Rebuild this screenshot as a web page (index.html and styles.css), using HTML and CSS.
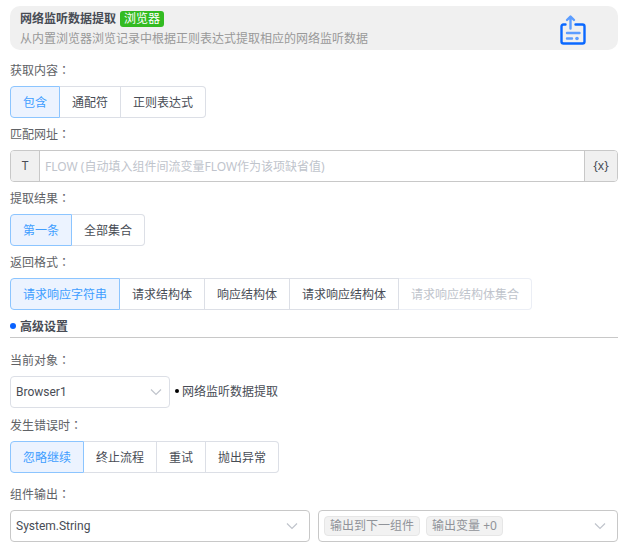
FILE: index.html
```html
<!DOCTYPE html>
<html lang="zh-CN">
<head>
    <meta charset="UTF-8">
    <meta name="viewport" content="width=device-width, initial-scale=1.0">
    <title>网络监听数据提取</title>
    <link rel="stylesheet" href="styles.css">
</head>
<body>
    <header class="header">
        <div class="header-text">
            <h1>网络监听数据提取 <span class="badge">浏览器</span></h1>
            <p>从内置浏览器浏览记录中根据正则表达式提取相应的网络监听数据</p>
        </div>
        <svg class="header-icon" viewBox="0 0 28 32" fill="none" stroke-width="2.4" stroke-linecap="round" stroke-linejoin="round" aria-hidden="true">
            <path stroke="#0a68ff" d="M6.5 10.5H4.5Q2.5 10.5 2.5 12.5V27.5Q2.5 29.5 4.5 29.5H23.5Q25.5 29.5 25.5 27.5V12.5Q25.5 10.5 23.5 10.5H16.5"/>
            <path stroke="#5c9dff" d="M11.5 14.5V3M8 6L11.5 2.5L15 6M8 19H20.5M8 24.5H13"/>
            <circle cx="18" cy="24.5" r="1.8" fill="#5c9dff" />
        </svg>
    </header>

    <form>
        <div class="field">
            <div class="field-label" id="content-label">获取内容<span class="colon" lang="zh-TW">：</span></div>
            <div class="radio-group" role="radiogroup" aria-labelledby="content-label">
                <label><input type="radio" name="content" checked><span>包含</span></label>
                <label><input type="radio" name="content"><span>通配符</span></label>
                <label><input type="radio" name="content"><span>正则表达式</span></label>
            </div>
        </div>

        <div class="field">
            <label class="field-label" for="url">匹配网址<span class="colon" lang="zh-TW">：</span></label>
            <div class="input-group">
                <button type="button" class="addon">T</button>
                <input type="text" id="url" placeholder="FLOW (自动填入组件间流变量FLOW作为该项缺省值)">
                <button type="button" class="addon">{x}</button>
            </div>
        </div>

        <div class="field">
            <div class="field-label" id="result-label">提取结果<span class="colon" lang="zh-TW">：</span></div>
            <div class="radio-group" role="radiogroup" aria-labelledby="result-label">
                <label><input type="radio" name="result" checked><span>第一条</span></label>
                <label><input type="radio" name="result"><span>全部集合</span></label>
            </div>
        </div>

        <div class="field">
            <div class="field-label" id="format-label">返回格式<span class="colon" lang="zh-TW">：</span></div>
            <div class="radio-group" role="radiogroup" aria-labelledby="format-label">
                <label><input type="radio" name="format" checked><span>请求响应字符串</span></label>
                <label><input type="radio" name="format"><span>请求结构体</span></label>
                <label><input type="radio" name="format"><span>响应结构体</span></label>
                <label><input type="radio" name="format"><span>请求响应结构体</span></label>
                <label><input type="radio" name="format" disabled><span>请求响应结构体集合</span></label>
            </div>
        </div>

        <h2 class="section-title">高级设置</h2>

        <div class="field">
            <label class="field-label" for="target">当前对象<span class="colon" lang="zh-TW">：</span></label>
            <div class="target-row">
                <div class="select-box light">
                    <select id="target">
                        <option>Browser1</option>
                    </select>
                    <svg class="arrow" viewBox="0 0 12 8" aria-hidden="true"><path d="M1 1.5L6 6.5L11 1.5"/></svg>
                </div>
                <span class="target-name">网络监听数据提取</span>
            </div>
        </div>

        <div class="field">
            <div class="field-label" id="error-label">发生错误时<span class="colon" lang="zh-TW">：</span></div>
            <div class="radio-group" role="radiogroup" aria-labelledby="error-label">
                <label><input type="radio" name="error" checked><span>忽略继续</span></label>
                <label><input type="radio" name="error"><span>终止流程</span></label>
                <label><input type="radio" name="error"><span>重试</span></label>
                <label><input type="radio" name="error"><span>抛出异常</span></label>
            </div>
        </div>

        <div class="field">
            <label class="field-label" for="output">组件输出<span class="colon" lang="zh-TW">：</span></label>
            <div class="output-row">
                <div class="select-box">
                    <select id="output">
                        <option>System.String</option>
                    </select>
                    <svg class="arrow" viewBox="0 0 12 8" aria-hidden="true"><path d="M1 1.5L6 6.5L11 1.5"/></svg>
                </div>
                <div class="select-box">
                    <button type="button" class="tag-select" aria-haspopup="listbox">
                        <span class="tag">输出到下一组件</span>
                        <span class="tag">输出变量 +0</span>
                    </button>
                    <svg class="arrow" viewBox="0 0 12 8" aria-hidden="true"><path d="M1 1.5L6 6.5L11 1.5"/></svg>
                </div>
            </div>
        </div>
    </form>
</body>
</html>
```
FILE: styles.css
```css
* {
    box-sizing: border-box;
}

body {
    margin: 0;
    padding: 6px 13px 16px 10px;
    background-color: #fff;
    color: #484c55;
    font-family: "Noto Sans", "Noto Sans CJK SC", sans-serif;
    font-size: 12px;
}

input,
select,
button {
    font-family: inherit;
    font-size: 12px;
    color: inherit;
}

.header {
    display: flex;
    justify-content: space-between;
    align-items: center;
    height: 44px;
    margin-bottom: 4px;
    padding: 2px 31px 0 10px;
    background-color: #f0f0f0;
    border-radius: 10px;
}

.header h1 {
    display: flex;
    align-items: center;
    gap: 4px;
    margin: 0;
    font-size: 12px;
    font-weight: bold;
    line-height: 20px;
}

.header p {
    margin: 0;
    color: #999;
    line-height: 20px;
}

.badge {
    padding: 0 4px;
    background-color: #33bb22;
    border-radius: 3px;
    color: #fff;
    font-weight: normal;
    line-height: 16px;
}

.header-icon {
    width: 28px;
    height: 32px;
    margin-top: 2px;
}

.field-label {
    display: block;
    padding-top: 2px;
    height: 32px;
    line-height: 30px;
    color: #606266;
}

.colon {
    font-family: "Noto Sans CJK TC", sans-serif;
    line-height: 1;
}

.radio-group {
    display: flex;
}

.radio-group input {
    position: absolute;
    opacity: 0;
}

.radio-group span {
    display: block;
    height: 32px;
    padding: 0 12px;
    border: 1px solid #dcdfe6;
    border-left-width: 0;
    line-height: 32px;
    white-space: nowrap;
    cursor: pointer;
}

.radio-group label:first-child span {
    border-left-width: 1px;
    border-radius: 4px 0 0 4px;
}

.radio-group label:last-child span {
    border-radius: 0 4px 4px 0;
}

.radio-group input:checked + span {
    background-color: #ecf3ff;
    border-color: #8cc5ff;
    color: #409eff;
}

.radio-group input:disabled + span {
    border-color: #ebeef5;
    color: #c0c4cc;
    cursor: not-allowed;
}

.input-group {
    display: flex;
    height: 32px;
    border: 1px solid #c8c8c8;
    border-radius: 4px;
    overflow: hidden;
}

.input-group input {
    flex: 1;
    min-width: 0;
    padding: 0 5px;
    border: 0;
    outline: none;
}

.input-group input::placeholder {
    color: #c0c4cc;
}

.addon {
    width: 29px;
    padding: 0 0 2px;
    border: 0;
    border-right: 1px solid #c8c8c8;
    background-color: #f0f0f0;
}

.addon:last-child {
    width: 33px;
    border-right: 0;
    border-left: 1px solid #c8c8c8;
}

.section-title {
    display: flex;
    align-items: center;
    gap: 4px;
    height: 28px;
    margin: 0 0 6px;
    padding-top: 4px;
    border-bottom: 1px solid #c8c8c8;
    font-size: 12px;
    font-weight: bold;
}

.section-title::before {
    content: "";
    width: 6px;
    height: 6px;
    border-radius: 50%;
    background-color: #0a62ff;
}

.target-row {
    display: flex;
    align-items: center;
    gap: 5px;
    margin-bottom: 1px;
}

.target-row .select-box {
    width: 160px;
}

.target-name {
    display: flex;
    align-items: center;
    gap: 3px;
    padding-bottom: 2px;
}

.target-name::before {
    content: "";
    width: 4px;
    height: 4px;
    border-radius: 50%;
    background-color: #000;
}

.output-row {
    display: grid;
    grid-template-columns: 1fr 1fr;
    gap: 8px;
}

.field:last-child {
    margin-top: 5px;
}

.select-box {
    position: relative;
}

.select-box select,
.tag-select {
    display: flex;
    align-items: center;
    gap: 6px;
    width: 100%;
    height: 32px;
    padding: 0 5px;
    border: 1px solid #c8c8c8;
    border-radius: 4px;
    background-color: #fff;
    appearance: none;
}

.select-box select {
    font-family: Roboto, "Noto Sans CJK SC", sans-serif;
}

.light select {
    border-color: #dcdfe6;
}

.arrow {
    position: absolute;
    top: 12px;
    right: 12px;
    width: 12px;
    height: 8px;
    fill: none;
    stroke: #c0c4cc;
    stroke-width: 1.2;
    pointer-events: none;
}

.light .arrow {
    right: 8px;
}

.tag {
    height: 20px;
    padding: 0 5px;
    border: 1px solid #e6e6e6;
    border-radius: 4px;
    background-color: #f2f2f2;
    color: #909399;
    line-height: 18px;
}
```
